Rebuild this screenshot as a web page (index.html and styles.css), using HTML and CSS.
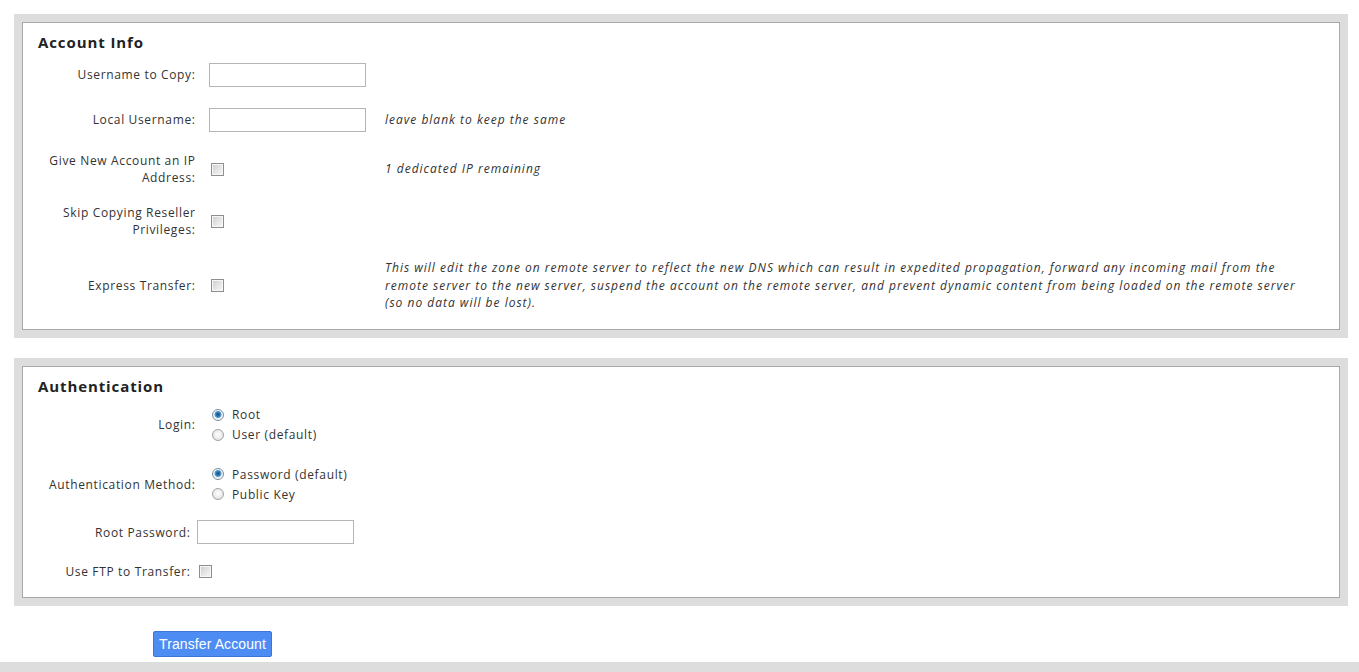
FILE: index.html
```html
<!DOCTYPE html>
<html>
<head>
<meta charset="utf-8">
<title>Transfer Account</title>
<link rel="stylesheet" href="styles.css">
</head>
<body>
<div class="page">
  <div class="panel">
    <div class="panel-inner">
      <h2 class="panel-title">Account Info</h2>
      <div class="form-grid info-grid">
        <label class="field-label" for="copyuser">Username to Copy:</label>
        <div class="field-control"><input class="text-input" type="text" id="copyuser"></div>
        <div class="field-note"></div>

        <label class="field-label" for="localuser">Local Username:</label>
        <div class="field-control"><input class="text-input" type="text" id="localuser"></div>
        <div class="field-note">leave blank to keep the same</div>

        <label class="field-label" for="newip">Give New Account an IP Address:</label>
        <div class="field-control"><input class="check" type="checkbox" id="newip"></div>
        <div class="field-note">1 dedicated IP remaining</div>

        <label class="field-label" for="skipres">Skip Copying Reseller Privileges:</label>
        <div class="field-control"><input class="check" type="checkbox" id="skipres"></div>
        <div class="field-note"></div>

        <label class="field-label" for="express">Express Transfer:</label>
        <div class="field-control"><input class="check" type="checkbox" id="express"></div>
        <div class="field-note">This will edit the zone on remote server to reflect the new DNS which can result in expedited propagation, forward any incoming mail from the remote server to the new server, suspend the account on the remote server, and prevent dynamic content from being loaded on the remote server (so no data will be lost).</div>
      </div>
    </div>
  </div>

  <div class="panel">
    <div class="panel-inner">
      <h2 class="panel-title">Authentication</h2>
      <div class="form-grid auth-grid">
        <div class="field-label">Login:</div>
        <div class="radio-group">
          <label class="radio-option"><input class="radio" type="radio" name="login" checked>Root</label>
          <label class="radio-option"><input class="radio" type="radio" name="login">User (default)</label>
        </div>

        <div class="field-label">Authentication Method:</div>
        <div class="radio-group">
          <label class="radio-option"><input class="radio" type="radio" name="method" checked>Password (default)</label>
          <label class="radio-option"><input class="radio" type="radio" name="method">Public Key</label>
        </div>
      </div>
      <div class="form-grid pass-grid">
        <label class="field-label" for="rootpass">Root Password:</label>
        <div class="field-control"><input class="text-input" type="password" id="rootpass"></div>

        <label class="field-label" for="useftp">Use FTP to Transfer:</label>
        <div class="field-control"><input class="check" type="checkbox" id="useftp"></div>
      </div>
    </div>
  </div>

  <div class="actions">
    <button class="btn-primary" type="button">Transfer Account</button>
  </div>
</div>
<div class="footer-bar"></div>
</body>
</html>
```

FILE: styles.css
```css
html, body {
  margin: 0;
  padding: 0;
  background: #ffffff;
}

body {
  font-family: "Open Sans", "DejaVu Sans", sans-serif;
  font-size: 12px;
  letter-spacing: 0.65px;
  color: #333333;
}

.page {
  padding: 14px 11px 0 14px;
}

.panel {
  background: #dddddd;
  padding: 8px;
  margin-bottom: 20px;
}

.panel-inner {
  background: #ffffff;
  border: 1px solid #a9a9a9;
  padding: 9px 15px 4px 15px;
}

.panel-title {
  margin: 0;
  font-size: 15px;
  font-weight: 700;
  letter-spacing: 0.9px;
  line-height: 20px;
  color: #222222;
}

.form-grid {
  display: grid;
  align-items: center;
}

.info-grid {
  grid-template-columns: 157px 162px 1fr;
  grid-template-rows: 45px 45px 54px 50px 79px;
  column-gap: 14px;
}

.auth-grid {
  grid-template-columns: 157px 1fr;
  grid-template-rows: 57px 62px;
  column-gap: 14px;
}

.pass-grid {
  grid-template-columns: 152px 1fr;
  grid-template-rows: 34px 44px;
  column-gap: 7px;
}

.field-label {
  text-align: right;
  line-height: 17px;
  margin-right: -0.6px;
}

.field-control {
  display: flex;
  align-items: center;
}

.field-note {
  font-style: italic;
  letter-spacing: 1px;
  line-height: 17.5px;
  padding-right: 10px;
}

.text-input {
  box-sizing: border-box;
  width: 157px;
  height: 24px;
  margin: 0;
  border: 1px solid #b5b5b5;
  padding: 2px 4px;
  font-family: inherit;
  font-size: 12px;
  background: #ffffff;
  outline: none;
}

.check {
  -webkit-appearance: none;
  appearance: none;
  box-sizing: border-box;
  width: 13px;
  height: 13px;
  margin: 0 0 0 2px;
  border: 1px solid #8e8e8e;
  background: linear-gradient(135deg, #cbcbcb 0%, #e9e9e9 60%, #f6f6f6 100%);
  box-shadow: inset 0 0 0 1px #f7f7f7;
}

.radio-group {
  display: flex;
  flex-direction: column;
}

.radio-option {
  display: flex;
  align-items: center;
  height: 20px;
  gap: 8px;
}

.radio {
  -webkit-appearance: none;
  appearance: none;
  box-sizing: border-box;
  width: 12px;
  height: 12px;
  margin: 0 0 0 3px;
  border: 1px solid #a3a3a3;
  border-radius: 50%;
  background: radial-gradient(circle at 50% 45%, #ffffff 0%, #ececec 55%, #d4d4d4 100%);
}

.radio:checked {
  border-color: #7f8f9c;
  background: radial-gradient(circle at 50% 45%, #0d4d7f 0px, #2f79b4 2px, #5ea4d8 3.2px, #eef2f5 3.8px, #f8f8f8 100%);
}

.actions {
  padding: 5px 0 5px 139px;
}

.btn-primary {
  box-sizing: border-box;
  width: 119px;
  height: 26px;
  margin: 0;
  padding: 0;
  border: 1px solid #3d75d8;
  border-radius: 2px;
  background: #4d8cf3;
  color: #ffffff;
  font-family: "Liberation Sans", Arial, sans-serif;
  font-size: 14px;
  letter-spacing: 0.1px;
  line-height: 24px;
  white-space: nowrap;
  cursor: pointer;
}

.footer-bar {
  height: 10px;
  background: #dddddd;
}
```
